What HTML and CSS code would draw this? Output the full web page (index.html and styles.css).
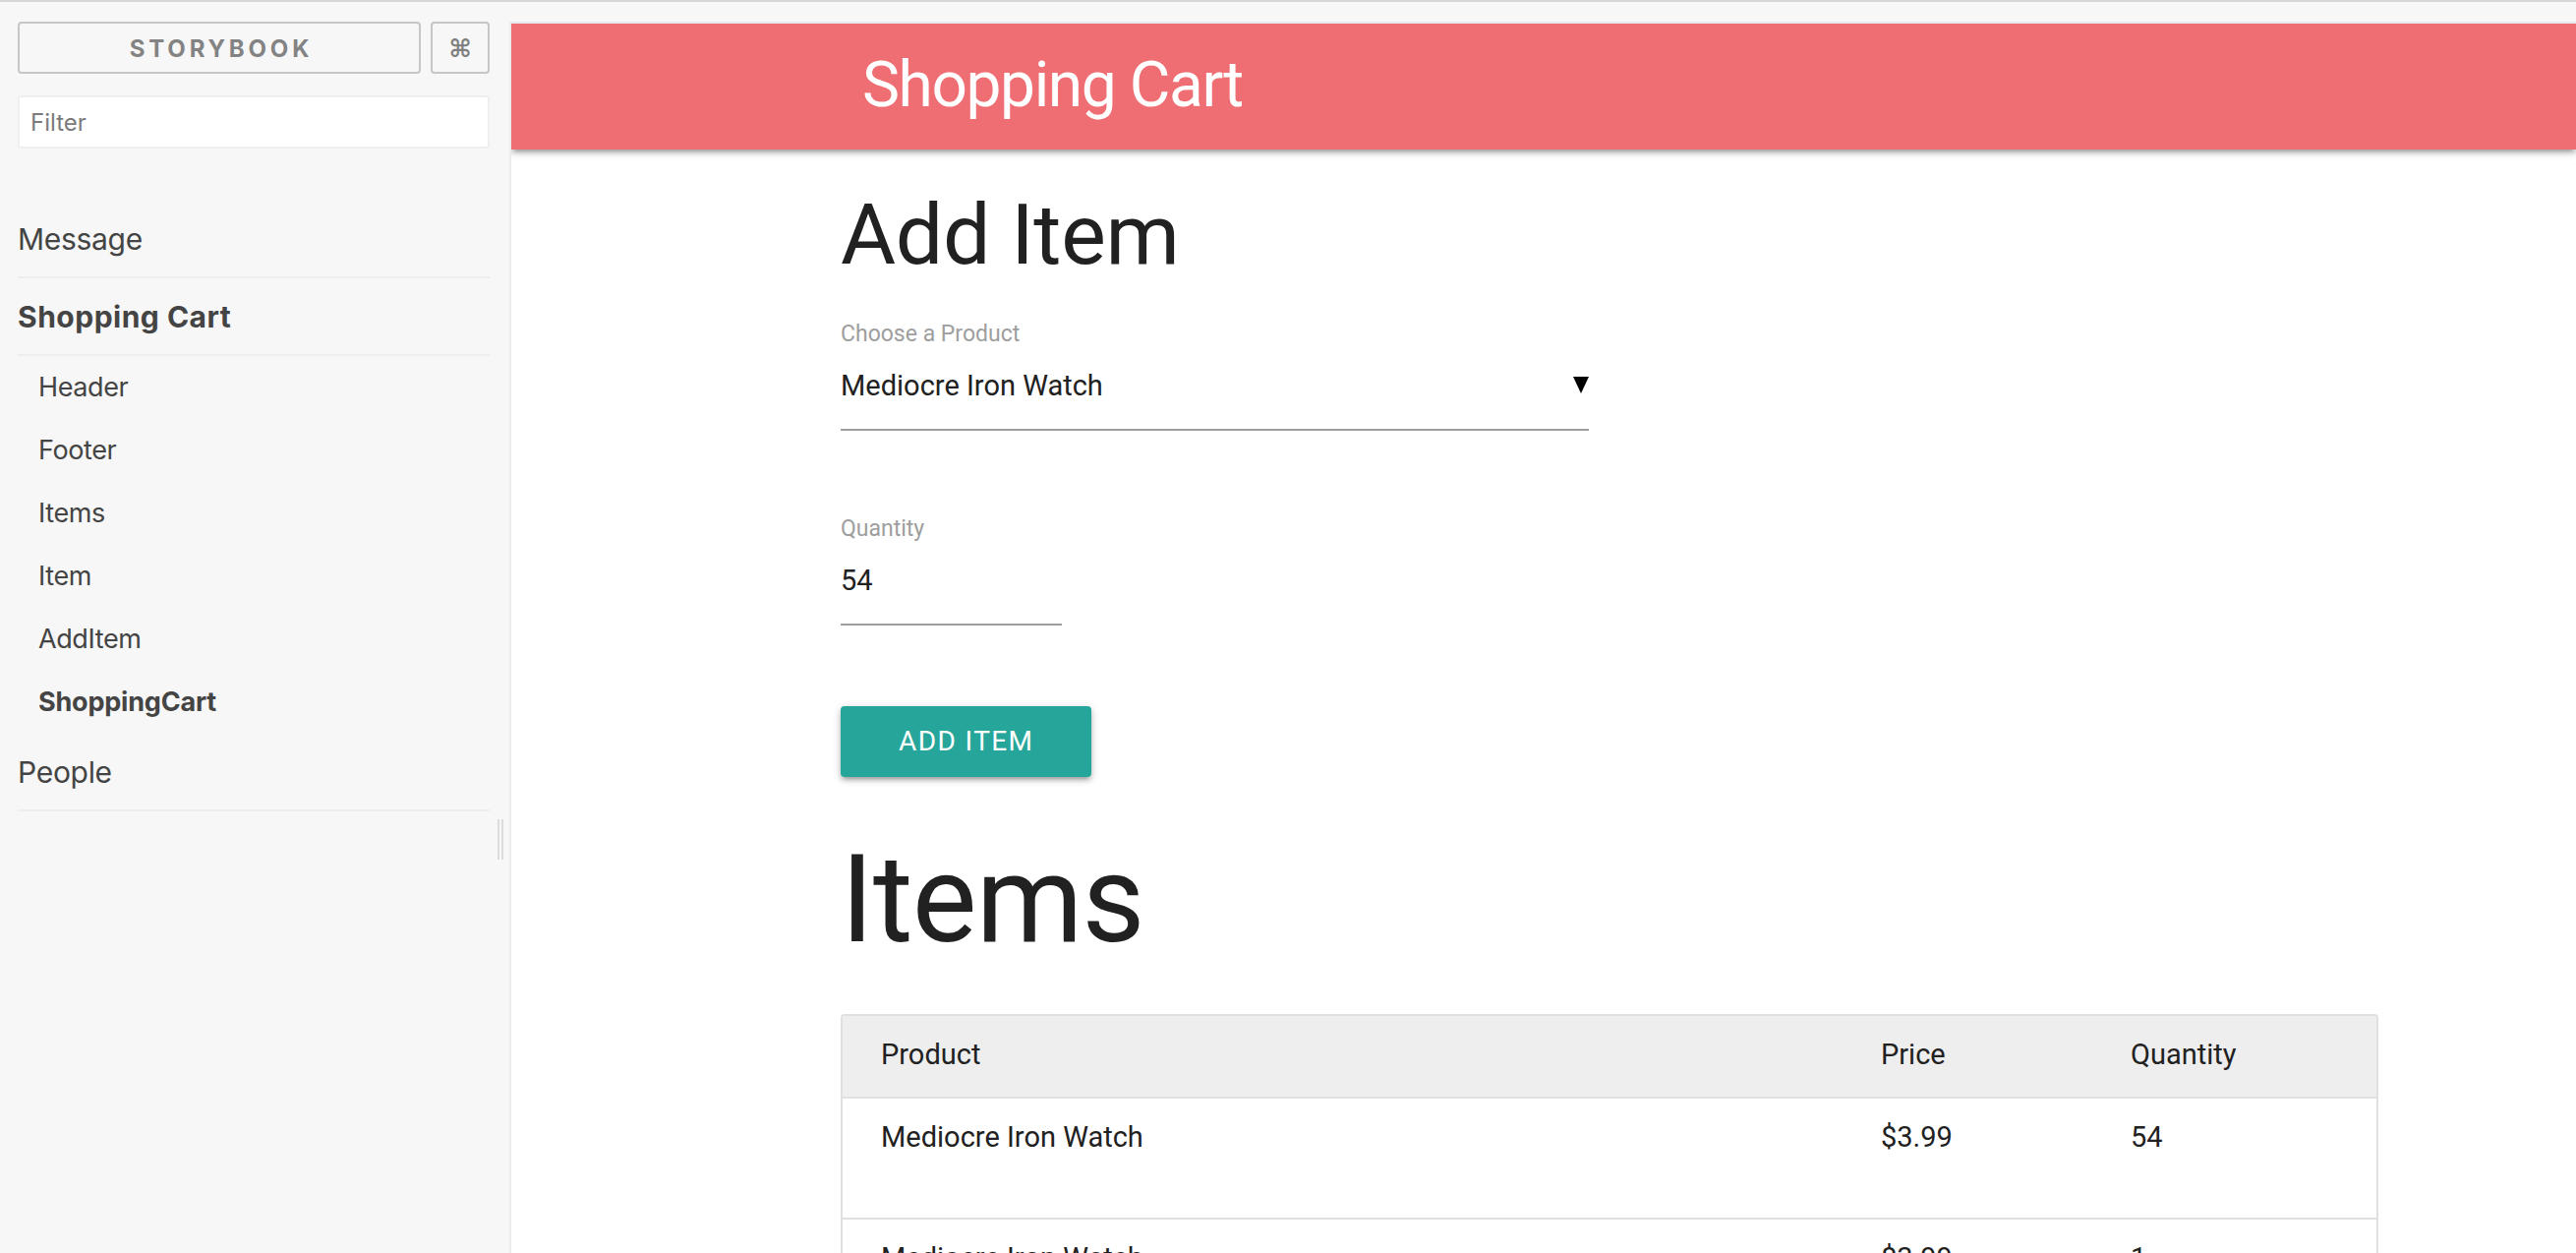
FILE: index.html
```html
<!DOCTYPE html>
<html lang="en">
<head>
<meta charset="utf-8">
<title>Storybook - Shopping Cart</title>
<link rel="stylesheet" href="styles.css">
</head>
<body>
<div class="app">
  <aside class="sidebar">
    <div class="brand-row">
      <a class="brand">STORYBOOK</a>
      <button class="shortcut">⌘</button>
    </div>
    <input class="filter" type="text" placeholder="Filter">
    <ul class="kinds">
      <li><div class="kind">Message</div></li>
      <li>
        <div class="kind active">Shopping Cart</div>
        <ul class="stories">
          <li>Header</li>
          <li>Footer</li>
          <li>Items</li>
          <li>Item</li>
          <li>AddItem</li>
          <li class="active">ShoppingCart</li>
        </ul>
      </li>
      <li><div class="kind">People</div></li>
    </ul>
    <div class="resizer"></div>
  </aside>
  <main class="preview">
    <header class="app-header">Shopping Cart</header>
    <div class="content">
      <h1 class="add-title">Add Item</h1>
      <div class="field">
        <label class="field-label">Choose a Product</label>
        <div class="select">
          <span>Mediocre Iron Watch</span>
          <svg class="caret" width="16" height="17" viewBox="0 0 16 17"><polygon points="0,0 16,0 8,17" fill="#000"/></svg>
        </div>
      </div>
      <div class="field field-qty">
        <label class="field-label">Quantity</label>
        <div class="qty">54</div>
      </div>
      <button class="btn">ADD ITEM</button>
      <h2 class="items-title">Items</h2>
      <div class="table-wrap">
        <table class="items">
          <colgroup><col class="c-product"><col class="c-price"><col class="c-qty"></colgroup>
          <thead>
            <tr><th>Product</th><th>Price</th><th>Quantity</th></tr>
          </thead>
          <tbody>
            <tr><td>Mediocre Iron Watch</td><td>$3.99</td><td>54</td></tr>
            <tr><td>Mediocre Iron Watch</td><td>$3.99</td><td>1</td></tr>
          </tbody>
        </table>
      </div>
    </div>
  </main>
</div>
</body>
</html>
```
FILE: styles.css
```css
* { box-sizing: border-box; }
html, body { margin: 0; padding: 0; height: 100%; overflow: hidden; }
body {
  background: #f7f7f7;
  border-top: 2px solid #d6d6d6;
  font-family: Inter, "Noto Sans", sans-serif;
}
.app { display: flex; height: 100%; }

/* Sidebar */
.sidebar {
  position: relative;
  width: 518px;
  flex: 0 0 518px;
  padding: 20px 20px 0 18px;
}
.brand-row { display: flex; gap: 10px; }
.brand {
  flex: 0 0 410px;
  height: 53px;
  border: 2px solid #c6c6c6;
  border-radius: 4px;
  display: flex;
  align-items: center;
  justify-content: center;
  font-family: Inter, sans-serif;
  font-weight: 700;
  font-size: 24px;
  letter-spacing: 3.8px;
  padding: 2px 0 0 4px;
  color: #838383;
}
.shortcut {
  flex: 0 0 60px;
  height: 53px;
  border: 2px solid #c6c6c6;
  border-radius: 4px;
  background: transparent;
  color: #7f7f7f;
  font-family: "DejaVu Sans", sans-serif;
  font-weight: 700;
  font-size: 25px;
  padding: 2px 0 0;
  display: flex;
  align-items: center;
  justify-content: center;
}
.filter {
  display: block;
  width: 480px;
  height: 54px;
  margin-top: 22px;
  border: 2px solid #efefef;
  border-radius: 3px;
  background: #fff;
  padding: 0 0 0 11px;
  font-family: Inter, sans-serif;
  font-size: 24px;
  outline: none;
}
.filter::placeholder { color: #7b7b7b; }
.kinds { list-style: none; margin: 53px 0 0; padding: 0; width: 480px; }
.kind {
  font-size: 30px;
  line-height: 40px;
  padding: 19px 0 18px;
  border-bottom: 2px solid #eeeeee;
  color: #444;
  letter-spacing: -0.3px;
}
.kind.active { font-weight: 700; letter-spacing: 0.5px; }
.stories { list-style: none; margin: 0; padding: 0 0 0 21px; }
.stories li { font-size: 27px; line-height: 64px; color: #444; letter-spacing: -0.4px; }
.stories li.active { font-weight: 700; letter-spacing: -0.2px; }
.resizer {
  position: absolute;
  left: 506px;
  top: 831px;
  width: 6px;
  height: 41px;
  border-left: 2px solid #dcdcdc;
  border-right: 2px solid #dcdcdc;
}

/* Preview */
.preview {
  flex: 1;
  margin-top: 20px;
  background: #fff;
  border-left: 2px solid #ececec;
  border-top: 2px solid #e6eaed;
  overflow: hidden;
  font-family: Roboto, sans-serif;
  color: #212121;
}
.app-header {
  position: relative;
  z-index: 1;
  height: 128px;
  background: #ef6e73;
  color: #fff;
  font-size: 64px;
  line-height: 126px;
  letter-spacing: -1.4px;
  padding-left: 357px;
  box-shadow: 0 4px 4px 0 rgba(0,0,0,.14), 0 6px 2px -4px rgba(0,0,0,.12), 0 2px 10px 0 rgba(0,0,0,.2);
}
.content { padding-left: 335px; }
.add-title {
  margin: 37px 0 0;
  font-size: 86px;
  line-height: 100px;
  font-weight: 400;
  letter-spacing: -0.3px;
}
.field { margin-top: 36px; }
.field-qty { margin-top: 85px; }
.field-label {
  display: block;
  font-size: 23px;
  line-height: 30px;
  color: #9e9e9e;
}
.select {
  width: 761px;
  margin-top: 17px;
  padding-bottom: 24px;
  border-bottom: 2px solid #9e9e9e;
  display: flex;
  align-items: flex-start;
  justify-content: space-between;
  font-size: 29px;
  line-height: 40px;
}
.caret { margin-top: 11px; }
.qty {
  width: 225px;
  margin-top: 17px;
  padding-bottom: 24px;
  border-bottom: 2px solid #9e9e9e;
  font-size: 29px;
  line-height: 40px;
}
.btn {
  display: block;
  margin-top: 82px;
  height: 72px;
  padding: 0 59px;
  border: none;
  border-radius: 4px;
  background: #26a69a;
  color: #fff;
  font-family: Roboto, sans-serif;
  font-size: 28px;
  line-height: 72px;
  letter-spacing: 1.4px;
  box-shadow: 0 4px 4px 0 rgba(0,0,0,.14), 0 6px 2px -4px rgba(0,0,0,.12), 0 2px 10px 0 rgba(0,0,0,.2);
}
.items-title {
  margin: 55px 0 0;
  font-size: 124px;
  line-height: 140px;
  font-weight: 400;
  letter-spacing: -0.8px;
}
.table-wrap {
  width: 1564px;
  margin-top: 46px;
  border: 2px solid #e0e0e0;
  border-radius: 4px;
  overflow: hidden;
}
.items { width: 100%; border-collapse: collapse; table-layout: fixed; }
.c-product { width: 1017px; }
.c-price { width: 254px; }
.items th, .items td {
  text-align: left;
  font-size: 29px;
  line-height: 40px;
  font-weight: 400;
  padding-left: 39px;
  border-bottom: 2px solid #e0e0e0;
}
.items th { background: #eeeeee; padding-top: 19px; padding-bottom: 23px; }
.items td { padding-top: 19px; padding-bottom: 62px; }
```
